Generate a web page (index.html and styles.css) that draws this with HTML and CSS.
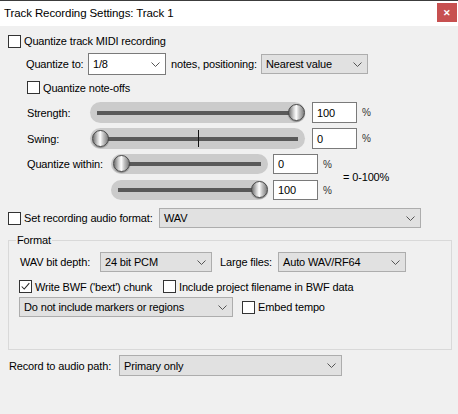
FILE: index.html
```html
<!DOCTYPE html>
<html>
<head>
<meta charset="utf-8">
<link rel="stylesheet" href="styles.css">
</head>
<body>
<div class="titlebar">
  <span class="title">Track Recording Settings: Track 1</span>
  <span class="close">✕</span>
</div>
<div class="content">
  <div class="row r1">
    <span class="cb"></span><span class="cbtext">Quantize track MIDI recording</span>
  </div>

  <div class="row r2">
    <span class="lbl w-qto">Quantize to:</span>
    <div class="select white w-q"><span>1/8</span><svg class="chev" viewBox="0 0 9 5" width="9" height="5"><path d="M0.5 0.5 L4.5 4.5 L8.5 0.5" fill="none" stroke="#555" stroke-width="1"/></svg></div>
    <span class="lbl w-notes">notes, positioning:</span>
    <div class="select w-pos"><span>Nearest value</span><svg class="chev" viewBox="0 0 9 5" width="9" height="5"><path d="M0.5 0.5 L4.5 4.5 L8.5 0.5" fill="none" stroke="#555" stroke-width="1"/></svg></div>
  </div>

  <div class="row r3">
    <span class="cb"></span><span class="cbtext">Quantize note-offs</span>
  </div>

  <div class="row r4">
    <span class="lbl w-slbl">Strength:</span>
    <div class="slider w-big"><div class="line"></div><div class="knob max"></div></div>
    <div class="num">100</div>
    <span class="pct">%</span>
  </div>

  <div class="row r5">
    <span class="lbl w-slbl">Swing:</span>
    <div class="slider w-big"><div class="line"></div><div class="tick"></div><div class="knob min"></div></div>
    <div class="num">0</div>
    <span class="pct">%</span>
  </div>

  <div class="within">
    <div class="within-rows">
      <div class="row r6">
        <span class="lbl w-qw">Quantize within:</span>
        <div class="slider w-small"><div class="line"></div><div class="knob min"></div></div>
        <div class="num small">0</div>
        <span class="pct pct2">%</span>
      </div>
      <div class="row r7">
        <span class="lbl w-qw"></span>
        <div class="slider w-small"><div class="line"></div><div class="knob max"></div></div>
        <div class="num small">100</div>
        <span class="pct pct2">%</span>
      </div>
    </div>
    <span class="range">= 0-100%</span>
  </div>

  <div class="row r8">
    <span class="cb"></span><span class="cbtext w-fmt">Set recording audio format:</span>
    <div class="select w-wav"><span>WAV</span><svg class="chev" viewBox="0 0 9 5" width="9" height="5"><path d="M0.5 0.5 L4.5 4.5 L8.5 0.5" fill="none" stroke="#555" stroke-width="1"/></svg></div>
  </div>

  <div class="group">
    <span class="legend">Format</span>
    <div class="row g1">
      <span class="lbl w-depth">WAV bit depth:</span>
      <div class="select w-depthsel"><span>24 bit PCM</span><svg class="chev" viewBox="0 0 9 5" width="9" height="5"><path d="M0.5 0.5 L4.5 4.5 L8.5 0.5" fill="none" stroke="#555" stroke-width="1"/></svg></div>
      <span class="lbl w-large">Large files:</span>
      <div class="select w-largesel"><span>Auto WAV/RF64</span><svg class="chev" viewBox="0 0 9 5" width="9" height="5"><path d="M0.5 0.5 L4.5 4.5 L8.5 0.5" fill="none" stroke="#555" stroke-width="1"/></svg></div>
    </div>
    <div class="row g2">
      <span class="cb checked"><svg viewBox="0 0 13 13" width="11" height="11"><path d="M2 6.5 L5 9.5 L11 2.5" fill="none" stroke="#222" stroke-width="1.2"/></svg></span><span class="cbtext w-bwf">Write BWF ('bext') chunk</span>
      <span class="cb"></span><span class="cbtext">Include project filename in BWF data</span>
    </div>
    <div class="row g3">
      <div class="select w-markers"><span>Do not include markers or regions</span><svg class="chev" viewBox="0 0 9 5" width="9" height="5"><path d="M0.5 0.5 L4.5 4.5 L8.5 0.5" fill="none" stroke="#555" stroke-width="1"/></svg></div>
      <span class="cb cb-embed"></span><span class="cbtext">Embed tempo</span>
    </div>
  </div>

  <div class="row r9">
    <span class="lbl w-path">Record to audio path:</span>
    <div class="select w-pathsel"><span>Primary only</span><svg class="chev" viewBox="0 0 9 5" width="9" height="5"><path d="M0.5 0.5 L4.5 4.5 L8.5 0.5" fill="none" stroke="#555" stroke-width="1"/></svg></div>
  </div>
</div>
</body>
</html>
```

FILE: styles.css
```css
* { box-sizing: border-box; }

body {
  margin: 0;
  width: 458px;
  height: 414px;
  overflow: hidden;
  background: #f0f0f0;
  font-family: "Liberation Sans", Arial, sans-serif;
  font-size: 11px;
  letter-spacing: -0.15px;
  color: #000;
}

.titlebar {
  height: 26px;
  background: #fff;
  border-top: 1px solid #3c3c3c;
  display: flex;
  align-items: flex-start;
  justify-content: space-between;
  padding: 0 1px 0 4px;
}

.title {
  font-size: 11.5px;
  letter-spacing: -0.1px;
  line-height: 24px;
}

.close {
  width: 20px;
  height: 19px;
  margin-top: 2px;
  background: #c75050;
  color: #fff;
  font-size: 9px;
  font-weight: bold;
  display: flex;
  align-items: center;
  justify-content: center;
}

.content {
  padding: 8px 0 0 8px;
}

.row {
  display: flex;
  align-items: center;
}

.cb {
  width: 13px;
  height: 13px;
  flex: none;
  border: 1px solid #333;
  background: #fff;
  display: flex;
  align-items: center;
  justify-content: center;
}

.cbtext {
  margin-left: 3px;
  white-space: nowrap;
}

.lbl {
  flex: none;
  white-space: nowrap;
}

/* row geometry */
.r1 { height: 14px; }
.r2 { height: 22px; margin-top: 5px; padding-left: 18px; }
.r3 { height: 13px; margin-top: 6px; padding-left: 19px; }
.r4 { height: 21px; margin-top: 8px; padding-left: 19px; }
.r5 { height: 21px; margin-top: 5px; padding-left: 19px; }
.within { display: flex; align-items: center; margin-top: 5px; }
.r6 { height: 20px; padding-left: 19px; }
.r7 { height: 20px; margin-top: 6px; padding-left: 19px; }
.r8 { height: 20px; margin-top: 8px; }

.w-qto { width: 62px; }
.w-notes { width: 95px; padding-left: 5px; }
.w-slbl { width: 63px; }
.w-qw { width: 84px; }
.w-fmt { width: 135px; }

/* selects */
.select {
  height: 100%;
  flex: none;
  display: flex;
  align-items: center;
  justify-content: space-between;
  padding: 0 5px 0 4px;
  background: #e1e1e1;
  border: 1px solid #adadad;
  white-space: nowrap;
}

.select.white {
  background: #fff;
  border-color: #7a7a7a;
}

.chev { flex: none; }

.w-q { width: 78px; }
.w-pos { width: 107px; height: 20px; }
.w-wav { width: 262px; }

/* sliders */
.slider {
  position: relative;
  flex: none;
  height: 100%;
  border-radius: 11px;
  background: #cbcbcb;
  padding: 0 7px;
  display: flex;
  align-items: center;
}

.w-big { width: 215px; }
.w-small { width: 157px; }

.line {
  flex: 1;
  height: 4px;
  background: #595959;
}

.tick {
  position: absolute;
  left: 108px;
  top: 2px;
  bottom: 2px;
  width: 1px;
  background: #111;
}

.knob {
  position: absolute;
  top: 2px;
  width: 17px;
  height: 17px;
  border-radius: 50%;
  border: 1px solid #4a4a4a;
  background: linear-gradient(90deg, #707070 0%, #cfcfcf 30%, #ffffff 48%, #c4c4c4 68%, #7c7c7c 100%);
  box-shadow: 0 1px 1px rgba(0, 0, 0, 0.35);
}

.w-small .knob { top: 1px; }

.knob.min { left: 2px; }
.knob.max { right: 0; }

.num {
  flex: none;
  width: 45px;
  height: 100%;
  margin-left: 7px;
  background: #fff;
  border: 1px solid #7a7a7a;
  padding-left: 4px;
  display: flex;
  align-items: center;
}

.num.small { margin-left: 5px; }

.pct {
  margin-left: 5px;
  font-size: 10px;
  color: #333;
}

.pct2 { width: 20px; flex: none; }

.range { white-space: nowrap; }

/* group box */
.group {
  position: relative;
  margin: 12px 6px 0 0;
  border: 1px solid #d9d9d9;
  padding: 11px 0 32px 10px;
}

.legend {
  position: absolute;
  top: -8px;
  left: 7px;
  line-height: 14px;
  padding: 0 1px;
  background: #f0f0f0;
}

.g1 { height: 20px; }
.g2 { height: 13px; margin-top: 8px; }
.g3 { height: 20px; margin-top: 4px; }

.w-depth { width: 81px; padding-left: 1px; }
.w-depthsel { width: 112px; }
.w-large { width: 66px; padding-left: 8px; }
.w-largesel { width: 128px; }
.w-bwf { width: 128px; }
.w-markers { width: 214px; }
.cb-embed { margin-left: 9px; }

.r9 { height: 21px; margin-top: 5px; padding-left: 1px; }
.w-path { width: 110px; }
.w-pathsel { width: 223px; }
```
